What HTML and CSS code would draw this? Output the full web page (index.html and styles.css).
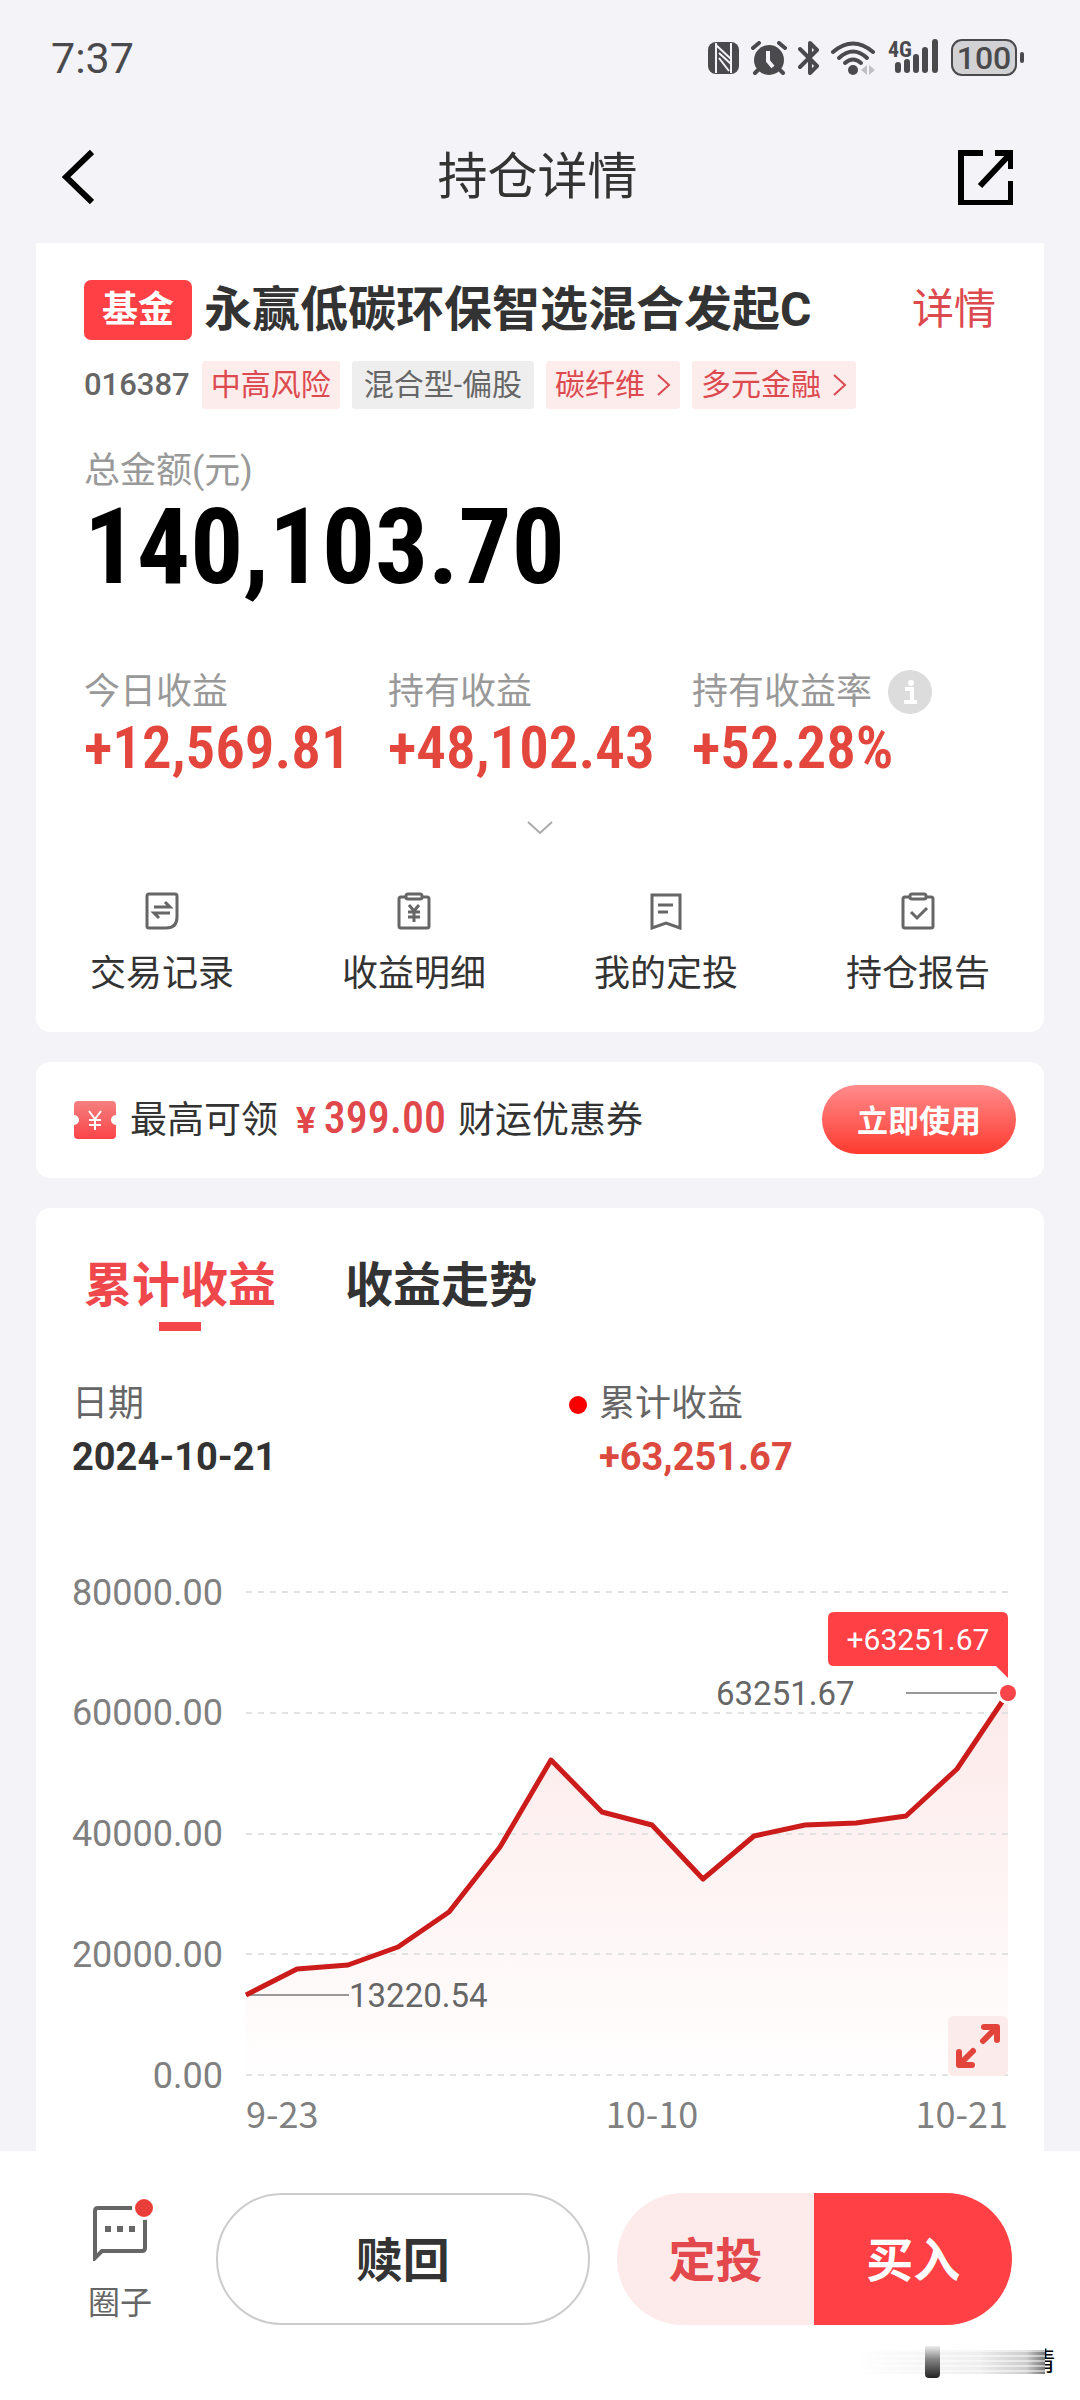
FILE: index.html
```html
<!DOCTYPE html>
<html lang="zh-CN">
<head>
    <meta charset="UTF-8">
    <meta name="viewport" content="width=device-width, initial-scale=1.0">
    <title>持仓详情</title>
    <link rel="stylesheet" href="styles.css">
</head>
<body>

    <div class="status-bar">
        <span class="time">7:37</span>
        <div class="status-icons">
            <svg width="32" height="34" viewBox="0 0 32 34">
                <rect x="0" y="1" width="31" height="32" rx="8" fill="#4a4a4d"/>
                <path d="M8 2 V32 M23 32 V2" stroke="#f4f4f8" stroke-width="2" fill="none"/>
                <path d="M8 4 L23 18 M11 12 L23 23 M11 17 L21 30" stroke="#f4f4f8" stroke-width="2" fill="none"/>
            </svg>
            <svg width="36" height="34" viewBox="0 0 36 34">
                <circle cx="18" cy="19" r="15" fill="#4a4a4d"/>
                <path d="M2 7 L8 2 M34 7 L28 2 M7 29 L4 32 M29 29 L32 32" stroke="#4a4a4d" stroke-width="4" stroke-linecap="round"/>
                <path d="M17 10 V20 L22 26" stroke="#f4f4f8" stroke-width="4" fill="none"/>
            </svg>
            <svg width="22" height="34" viewBox="0 0 22 34">
                <path d="M2 8 L19 25 L12 32 V2 L19 9 L2 26" stroke="#4a4a4d" stroke-width="4" stroke-linecap="round" stroke-linejoin="round" fill="none"/>
            </svg>
            <svg width="46" height="34" viewBox="0 0 46 34">
                <g fill="none" stroke="#4a4a4d" stroke-width="4" stroke-linecap="round">
                    <path d="M2 11 Q22 -6 42 11"/>
                    <path d="M8 17 Q22 4 36 17"/>
                    <path d="M14 22 Q22 15 30 22"/>
                </g>
                <circle cx="22" cy="29" r="5" fill="#4a4a4d"/>
                <path d="M30 29 L36 24 V34 Z M44 29 L38 24 V34 Z" fill="#c0c0c4"/>
            </svg>
            <svg width="52" height="44" viewBox="0 0 52 44">
                <text class="net-type" x="0" y="21">4G</text>
                <path d="M10 29 V34 M19 26 V34 M28 21 V34 M37 14 V34 M47 6 V34" stroke="#4a4a4d" stroke-width="6" stroke-linecap="round"/>
            </svg>
            <div class="battery">100</div>
        </div>
    </div>

    <header class="nav">
        <button class="icon-btn" aria-label="返回">
            <svg width="32" height="56" viewBox="0 0 32 56">
                <path d="M30 3 L4 28 L30 53" fill="none" stroke="#000" stroke-width="6"/>
            </svg>
        </button>
        <h1>持仓详情</h1>
        <button class="icon-btn" aria-label="分享">
            <svg width="56" height="56" viewBox="0 0 56 56">
                <path d="M26 4 H4 V54 H54 V32" fill="none" stroke="#000" stroke-width="6"/>
                <path d="M38 4 H54 V20 M54 4 L23 37" fill="none" stroke="#000" stroke-width="6"/>
            </svg>
        </button>
    </header>

    <main class="content">
        <section class="card summary">
            <div class="fund-title">
                <span class="badge">基金</span>
                <h2>永赢低碳环保智选混合发起C</h2>
                <a class="detail-link" href="#">详情</a>
            </div>
            <div class="tags">
                <span class="code">016387</span>
                <span class="tag">中高风险</span>
                <span class="tag gray">混合型-偏股</span>
                <a class="tag" href="#">碳纤维
                    <svg width="14" height="24" viewBox="0 0 14 24"><path d="M1 2 L12 12 L1 22" fill="none" stroke="#dc4a4f" stroke-width="2"/></svg>
                </a>
                <a class="tag" href="#">多元金融
                    <svg width="14" height="24" viewBox="0 0 14 24"><path d="M1 2 L12 12 L1 22" fill="none" stroke="#dc4a4f" stroke-width="2"/></svg>
                </a>
            </div>

            <p class="label">总金额(元)</p>
            <p class="total">140,103.70</p>

            <div class="profits">
                <div class="profit">
                    <p class="label">今日收益</p>
                    <p class="value">+12,569.81</p>
                </div>
                <div class="profit">
                    <p class="label">持有收益</p>
                    <p class="value">+48,102.43</p>
                </div>
                <div class="profit">
                    <p class="label">持有收益率
                        <svg width="44" height="44" viewBox="0 0 44 44">
                            <circle cx="22" cy="22" r="22" fill="#dcdcdc"/>
                            <circle cx="23" cy="13" r="3" fill="#fff"/>
                            <path d="M17 19 H24 V32 M16 32 H29" fill="none" stroke="#fff" stroke-width="4"/>
                        </svg>
                    </p>
                    <p class="value">+52.28%</p>
                </div>
            </div>

            <button class="expand" aria-label="展开">
                <svg width="26" height="14" viewBox="0 0 26 14"><path d="M1 1 L13 12 L25 1" fill="none" stroke="#aaa" stroke-width="2"/></svg>
            </button>

            <nav class="actions">
                <a href="#">
                    <svg width="34" height="38" viewBox="0 0 34 38" fill="none" stroke="#666" stroke-width="3">
                        <path d="M4 2 H30 Q32 2 32 4 V25 Q32 36 21 36 H4 Q2 36 2 34 V4 Q2 2 4 2 Z"/>
                        <path d="M9 15 H25 L20 10 M25 21 H9 L14 26"/>
                    </svg>
                    交易记录
                </a>
                <a href="#">
                    <svg width="34" height="38" viewBox="0 0 34 38" fill="none" stroke="#666" stroke-width="3">
                        <path d="M9 5 H4 Q2 5 2 7 V34 Q2 36 4 36 H30 Q32 36 32 34 V7 Q32 5 30 5 H25"/>
                        <rect x="9" y="2" width="16" height="5" rx="2"/>
                        <path d="M12 13 L17 19 L22 13 M17 19 V30 M11 20 H23 M11 25 H23"/>
                    </svg>
                    收益明细
                </a>
                <a href="#">
                    <svg width="34" height="38" viewBox="0 0 34 38" fill="none" stroke="#666" stroke-width="3">
                        <path d="M3 3 H31 V36 L17 31 L3 36 Z"/>
                        <path d="M9 13 H24 M9 20 H19"/>
                    </svg>
                    我的定投
                </a>
                <a href="#">
                    <svg width="34" height="38" viewBox="0 0 34 38" fill="none" stroke="#666" stroke-width="3">
                        <path d="M9 5 H4 Q2 5 2 7 V34 Q2 36 4 36 H30 Q32 36 32 34 V7 Q32 5 30 5 H25"/>
                        <rect x="9" y="2" width="16" height="5" rx="2"/>
                        <path d="M10 20 L16 26 L26 16"/>
                    </svg>
                    持仓报告
                </a>
            </nav>
        </section>

        <section class="card coupon">
            <svg width="42" height="38" viewBox="0 0 42 38">
                <defs>
                    <linearGradient id="ticket" x1="0" y1="0" x2="0" y2="1">
                        <stop offset="0" stop-color="#f58080"/>
                        <stop offset="1" stop-color="#fb4448"/>
                    </linearGradient>
                </defs>
                <path d="M4 0 H38 Q42 0 42 4 V14 A5 5 0 0 0 42 24 V34 Q42 38 38 38 H4 Q0 38 0 34 V24 A5 5 0 0 0 0 14 V4 Q0 0 4 0 Z" fill="url(#ticket)"/>
                <path d="M15 10 L21 18 L27 10 M21 18 V29 M15 19 H27 M15 24 H27" fill="none" stroke="#fff" stroke-width="2"/>
            </svg>
            <p>最高可领<span class="yen">¥</span><span class="amount">399.00</span>财运优惠券</p>
            <button class="use-btn">立即使用</button>
        </section>

        <section class="card trend">
            <div class="tabs">
                <button class="tab active">累计收益</button>
                <button class="tab">收益走势</button>
            </div>

            <div class="legend">
                <div class="legend-item">
                    <p>日期</p>
                    <p class="legend-value">2024-10-21</p>
                </div>
                <div class="legend-item">
                    <p class="dot">累计收益</p>
                    <p class="legend-value red">+63,251.67</p>
                </div>
            </div>

            <div class="chart">
                <svg class="chart-svg" viewBox="0 0 960 620">
                    <defs>
                        <linearGradient id="area" x1="0" y1="0" x2="0" y2="1">
                            <stop offset="0" stop-color="#fdeaea"/>
                            <stop offset="1" stop-color="#fffefe"/>
                        </linearGradient>
                    </defs>
                    <path fill="url(#area)" d="M186 465 L237 439 L288 435 L338 417 L389 382 L440 317 L491 230 L542 282 L592 295 L643 349 L694 306 L745 295 L796 293 L846 286 L897 239 L948 163 V545 H186 Z"/>
                    <g class="grid">
                        <path d="M186 62 H948"/>
                        <path d="M186 183 H948"/>
                        <path d="M186 304 H948"/>
                        <path d="M186 424 H948"/>
                        <path d="M186 545 H948"/>
                    </g>
                    <g class="axis y-axis">
                        <text x="163" y="75">80000.00</text>
                        <text x="163" y="195">60000.00</text>
                        <text x="163" y="316">40000.00</text>
                        <text x="163" y="437">20000.00</text>
                        <text x="163" y="558">0.00</text>
                    </g>
                    <g class="axis x-axis">
                        <text x="186" y="598">9-23</text>
                        <text x="592" y="598" text-anchor="middle">10-10</text>
                        <text x="948" y="598" text-anchor="end">10-21</text>
                    </g>
                    <path class="leader" d="M186 465 H289 M846 163 H938"/>
                    <polyline class="line" points="186,465 237,439 288,435 338,417 389,382 440,317 491,230 542,282 592,295 643,349 694,306 745,295 796,293 846,286 897,239 948,163"/>
                    <circle cx="948" cy="163" r="11" fill="#fff"/>
                    <circle cx="948" cy="163" r="8" fill="#f8454a"/>
                    <text class="point-label" x="289" y="477">13220.54</text>
                    <text class="point-label" x="656" y="175">63251.67</text>
                    <path d="M774 82 H942 Q948 82 948 88 V148 L936 136 H774 Q768 136 768 130 V88 Q768 82 774 82 Z" fill="#ff4044"/>
                    <text class="tip-text" x="858" y="120">+63251.67</text>
                </svg>
                <button class="zoom-btn" aria-label="全屏">
                    <svg width="46" height="46" viewBox="0 0 46 46" fill="none" stroke="#e2443c" stroke-width="6" stroke-linecap="round" stroke-linejoin="round">
                        <path d="M29 4 H42 V17 M41 5 L28 18"/>
                        <path d="M17 42 H4 V29 M5 41 L18 28"/>
                    </svg>
                </button>
            </div>
        </section>
    </main>

    <footer class="bottom-bar">
        <a class="circle" href="#">
            <svg width="72" height="64" viewBox="0 0 72 64">
                <path d="M11 61 V14 Q11 11 14 11 H58 Q61 11 61 14 V51 Q61 54 58 54 H18 Z" fill="none" stroke="#666" stroke-width="4"/>
                <path d="M21 29 h6 v6 h-6 Z M33 29 h6 v6 h-6 Z M45 29 h6 v6 h-6 Z" fill="#666"/>
                <circle cx="60" cy="11" r="12" fill="#fff"/>
                <circle cx="60" cy="11" r="9" fill="#ea3e3a"/>
            </svg>
            圈子
        </a>
        <button class="redeem">赎回</button>
        <div class="trade">
            <button class="invest">定投</button>
            <button class="buy">买入</button>
        </div>
        <div class="watermark"><i></i><span>情</span></div>
    </footer>

</body>
</html>
```
FILE: styles.css
```css
* {
    margin: 0;
    padding: 0;
    box-sizing: border-box;
}

body {
    display: flex;
    flex-direction: column;
    height: 100vh;
    background-color: #f4f4f8;
    color: #333;
    font-family: Roboto, "Noto Sans CJK SC", sans-serif;
    font-size: 36px;
    line-height: 48px;
}

button {
    border: none;
    background: none;
    color: inherit;
    font-family: inherit;
    cursor: pointer;
}

a {
    color: inherit;
    text-decoration: none;
}

svg {
    display: block;
    flex: none;
}

/* Status bar */
.status-bar {
    display: flex;
    justify-content: space-between;
    align-items: center;
    height: 115px;
    padding: 0 63px 0 51px;
    color: #4a4a4d;
    flex: none;
}

.time {
    font-size: 43px;
}

.status-icons {
    display: flex;
    align-items: center;
    gap: 11px;
}

.net-type {
    font-family: "Roboto Condensed", Roboto, sans-serif;
    font-size: 22px;
    font-weight: 700;
    fill: #4a4a4d;
}

.battery {
    position: relative;
    width: 66px;
    height: 37px;
    border: 2px solid #4a4a4d;
    border-radius: 11px;
    background: #d2d2d5;
    font-size: 32px;
    font-weight: 500;
    line-height: 34px;
    text-align: center;
}

.battery::after {
    content: "";
    position: absolute;
    right: -9px;
    top: 11px;
    width: 4px;
    height: 11px;
    border-radius: 2px;
    background: #4a4a4d;
}

/* Nav */
.nav {
    display: flex;
    justify-content: space-between;
    align-items: center;
    height: 128px;
    padding: 0 67px 4px 62px;
    flex: none;
}

.nav h1 {
    font-size: 50px;
    font-weight: 400;
}

.icon-btn {
    display: flex;
    width: 56px;
}

/* Cards */
.content {
    flex: 1;
    min-height: 0;
    overflow: hidden;
    padding: 0 36px;
}

.card {
    background: #fff;
    border-radius: 14px;
    margin-bottom: 30px;
}

.summary {
    border-radius: 0 0 14px 14px;
    padding: 37px 0 34px;
}

.fund-title {
    display: flex;
    align-items: center;
    padding: 0 48px;
}

.badge {
    padding: 0 18px;
    border-radius: 7px;
    background: #ff4044;
    color: #fff;
    font-weight: 700;
    line-height: 60px;
}

.fund-title h2 {
    flex: 1;
    margin-left: 12px;
    font-size: 48px;
    font-weight: 700;
}

.detail-link {
    color: #dc4a4f;
    font-size: 42px;
}

.tags {
    display: flex;
    gap: 12px;
    margin-top: 21px;
    padding: 0 48px;
    font-size: 30px;
}

.code {
    color: #666;
    font-size: 31px;
    font-weight: 500;
}

.tag {
    display: flex;
    align-items: center;
    gap: 12px;
    padding: 0 9px;
    border-radius: 3px;
    background: #fdecec;
    color: #dc4a4f;
}

.tag.gray {
    padding: 0 12px;
    background: #eee;
    color: #666;
}

.label {
    display: flex;
    align-items: center;
    gap: 16px;
    color: #999;
}

.summary > .label {
    margin: 38px 48px 0;
}

.total {
    margin: 0 48px;
    color: #000;
    font-family: "Roboto Condensed", "Liberation Sans Narrow", Roboto, sans-serif;
    font-size: 105px;
    font-weight: 700;
    line-height: 106px;
}

.profits {
    display: flex;
    margin-top: 67px;
    padding: 0 48px;
}

.profit {
    flex: 1;
}

.value {
    color: #e2463c;
    font-family: "Roboto Condensed", "Liberation Sans Narrow", Roboto, sans-serif;
    font-size: 59px;
    font-weight: 600;
    line-height: 64px;
}

.expand {
    display: flex;
    margin: 41px auto 0;
}

.actions {
    display: flex;
    margin-top: 57px;
}

.actions a {
    display: flex;
    flex: 1;
    flex-direction: column;
    align-items: center;
    gap: 20px;
}

/* Coupon */
.coupon {
    display: flex;
    align-items: center;
    gap: 14px;
    margin-bottom: 30px;
    padding: 23px 28px 24px 38px;
}

.coupon p {
    flex: 1;
    font-size: 37px;
}

.yen {
    margin: 0 8px 0 18px;
    color: #e0484c;
    font-weight: 600;
}

.amount {
    margin-right: 12px;
    color: #e0484c;
    font-family: "Roboto Condensed", "Liberation Sans Narrow", Roboto, sans-serif;
    font-size: 44px;
    font-weight: 500;
}

.use-btn {
    width: 194px;
    height: 69px;
    padding-bottom: 3px;
    border-radius: 35px;
    background: linear-gradient(#ff8c8c, #fd3a30);
    color: #fff;
    font-size: 31px;
    font-weight: 700;
}

/* Trend */
.trend {
    margin-bottom: 0;
    padding: 38px 0 30px;
}

.tabs {
    display: flex;
    gap: 69px;
    padding: 0 48px;
}

.tab {
    position: relative;
    height: 66px;
    font-size: 48px;
    font-weight: 700;
}

.tab.active {
    color: #ee484c;
}

.tab.active::after {
    content: "";
    position: absolute;
    left: 50%;
    bottom: -19px;
    width: 42px;
    height: 9px;
    margin-left: -21px;
    background: #f2464a;
}

.legend {
    display: grid;
    grid-template-columns: 527fr 407fr;
    margin-top: 66px;
    padding: 0 38px 0 36px;
    color: #666;
    line-height: 53px;
}

.legend-value {
    color: #333;
    font-size: 38px;
    font-weight: 700;
}

.legend-value.red {
    color: #dc4a3f;
}

.dot {
    position: relative;
}

.dot::before {
    content: "";
    position: absolute;
    left: -30px;
    top: 18px;
    width: 18px;
    height: 18px;
    border-radius: 50%;
    background: #f80000;
}

.chart {
    position: relative;
    margin: 46px 24px 0;
}

.chart-svg {
    width: 100%;
}

.grid {
    stroke: #e2e2e2;
    stroke-width: 2;
    stroke-dasharray: 6;
}

.axis {
    fill: #808080;
    font-size: 36px;
}

.y-axis {
    text-anchor: end;
}

.x-axis {
    font-family: "Noto Sans CJK SC", sans-serif;
}

.leader {
    stroke: #999;
    stroke-width: 2;
}

.line {
    fill: none;
    stroke: #cb1b1b;
    stroke-width: 5;
    stroke-linejoin: round;
}

.point-label {
    fill: #666;
    font-size: 33px;
}

.tip-text {
    fill: #fff;
    font-size: 30px;
    text-anchor: middle;
}

.zoom-btn {
    position: absolute;
    right: 12px;
    bottom: 74px;
    display: flex;
    align-items: center;
    justify-content: center;
    width: 60px;
    height: 60px;
    border-radius: 6px;
    background: #fcebeb;
}

/* Bottom bar */
.bottom-bar {
    position: relative;
    display: flex;
    align-items: flex-start;
    height: 249px;
    padding: 42px 68px 0 84px;
    background: #fff;
    flex: none;
}

.circle {
    display: flex;
    flex-direction: column;
    align-items: center;
    gap: 18px;
    width: 72px;
    padding-top: 4px;
    color: #666;
    font-size: 32px;
}

.redeem, .invest, .buy {
    height: 132px;
    padding-bottom: 5px;
    font-size: 47px;
    font-weight: 700;
}

.redeem {
    flex: 370;
    margin: 0 27px 0 60px;
    border: 2px solid #ccc;
    border-radius: 66px;
}

.trade {
    display: flex;
    flex: 396;
}

.invest {
    flex: 1;
    border-radius: 66px 0 0 66px;
    background: #fdeaea;
    color: #e2484c;
}

.buy {
    flex: 1;
    border-radius: 0 66px 66px 0;
    background: #ff4044;
    color: #fff;
}

.watermark {
    position: absolute;
    right: 25px;
    bottom: 23px;
    display: flex;
    justify-content: flex-end;
    width: 198px;
    height: 30px;
}

.watermark::before {
    content: "";
    flex: 1;
    margin: 3px 0;
    background: repeating-linear-gradient(rgba(255, 255, 255, 0.5) 0 2px, transparent 2px 5px), linear-gradient(90deg, #fff, #eee 65%, #ccc 90%, #777);
}

.watermark i {
    position: absolute;
    left: 68px;
    top: -1px;
    width: 15px;
    height: 32px;
    border-radius: 0 0 4px 4px;
    background: linear-gradient(#eee, #888 40%, #222);
}

.watermark span {
    display: flex;
    justify-content: flex-end;
    width: 10px;
    overflow: hidden;
    color: #000;
    font-size: 26px;
    line-height: 30px;
}
```
